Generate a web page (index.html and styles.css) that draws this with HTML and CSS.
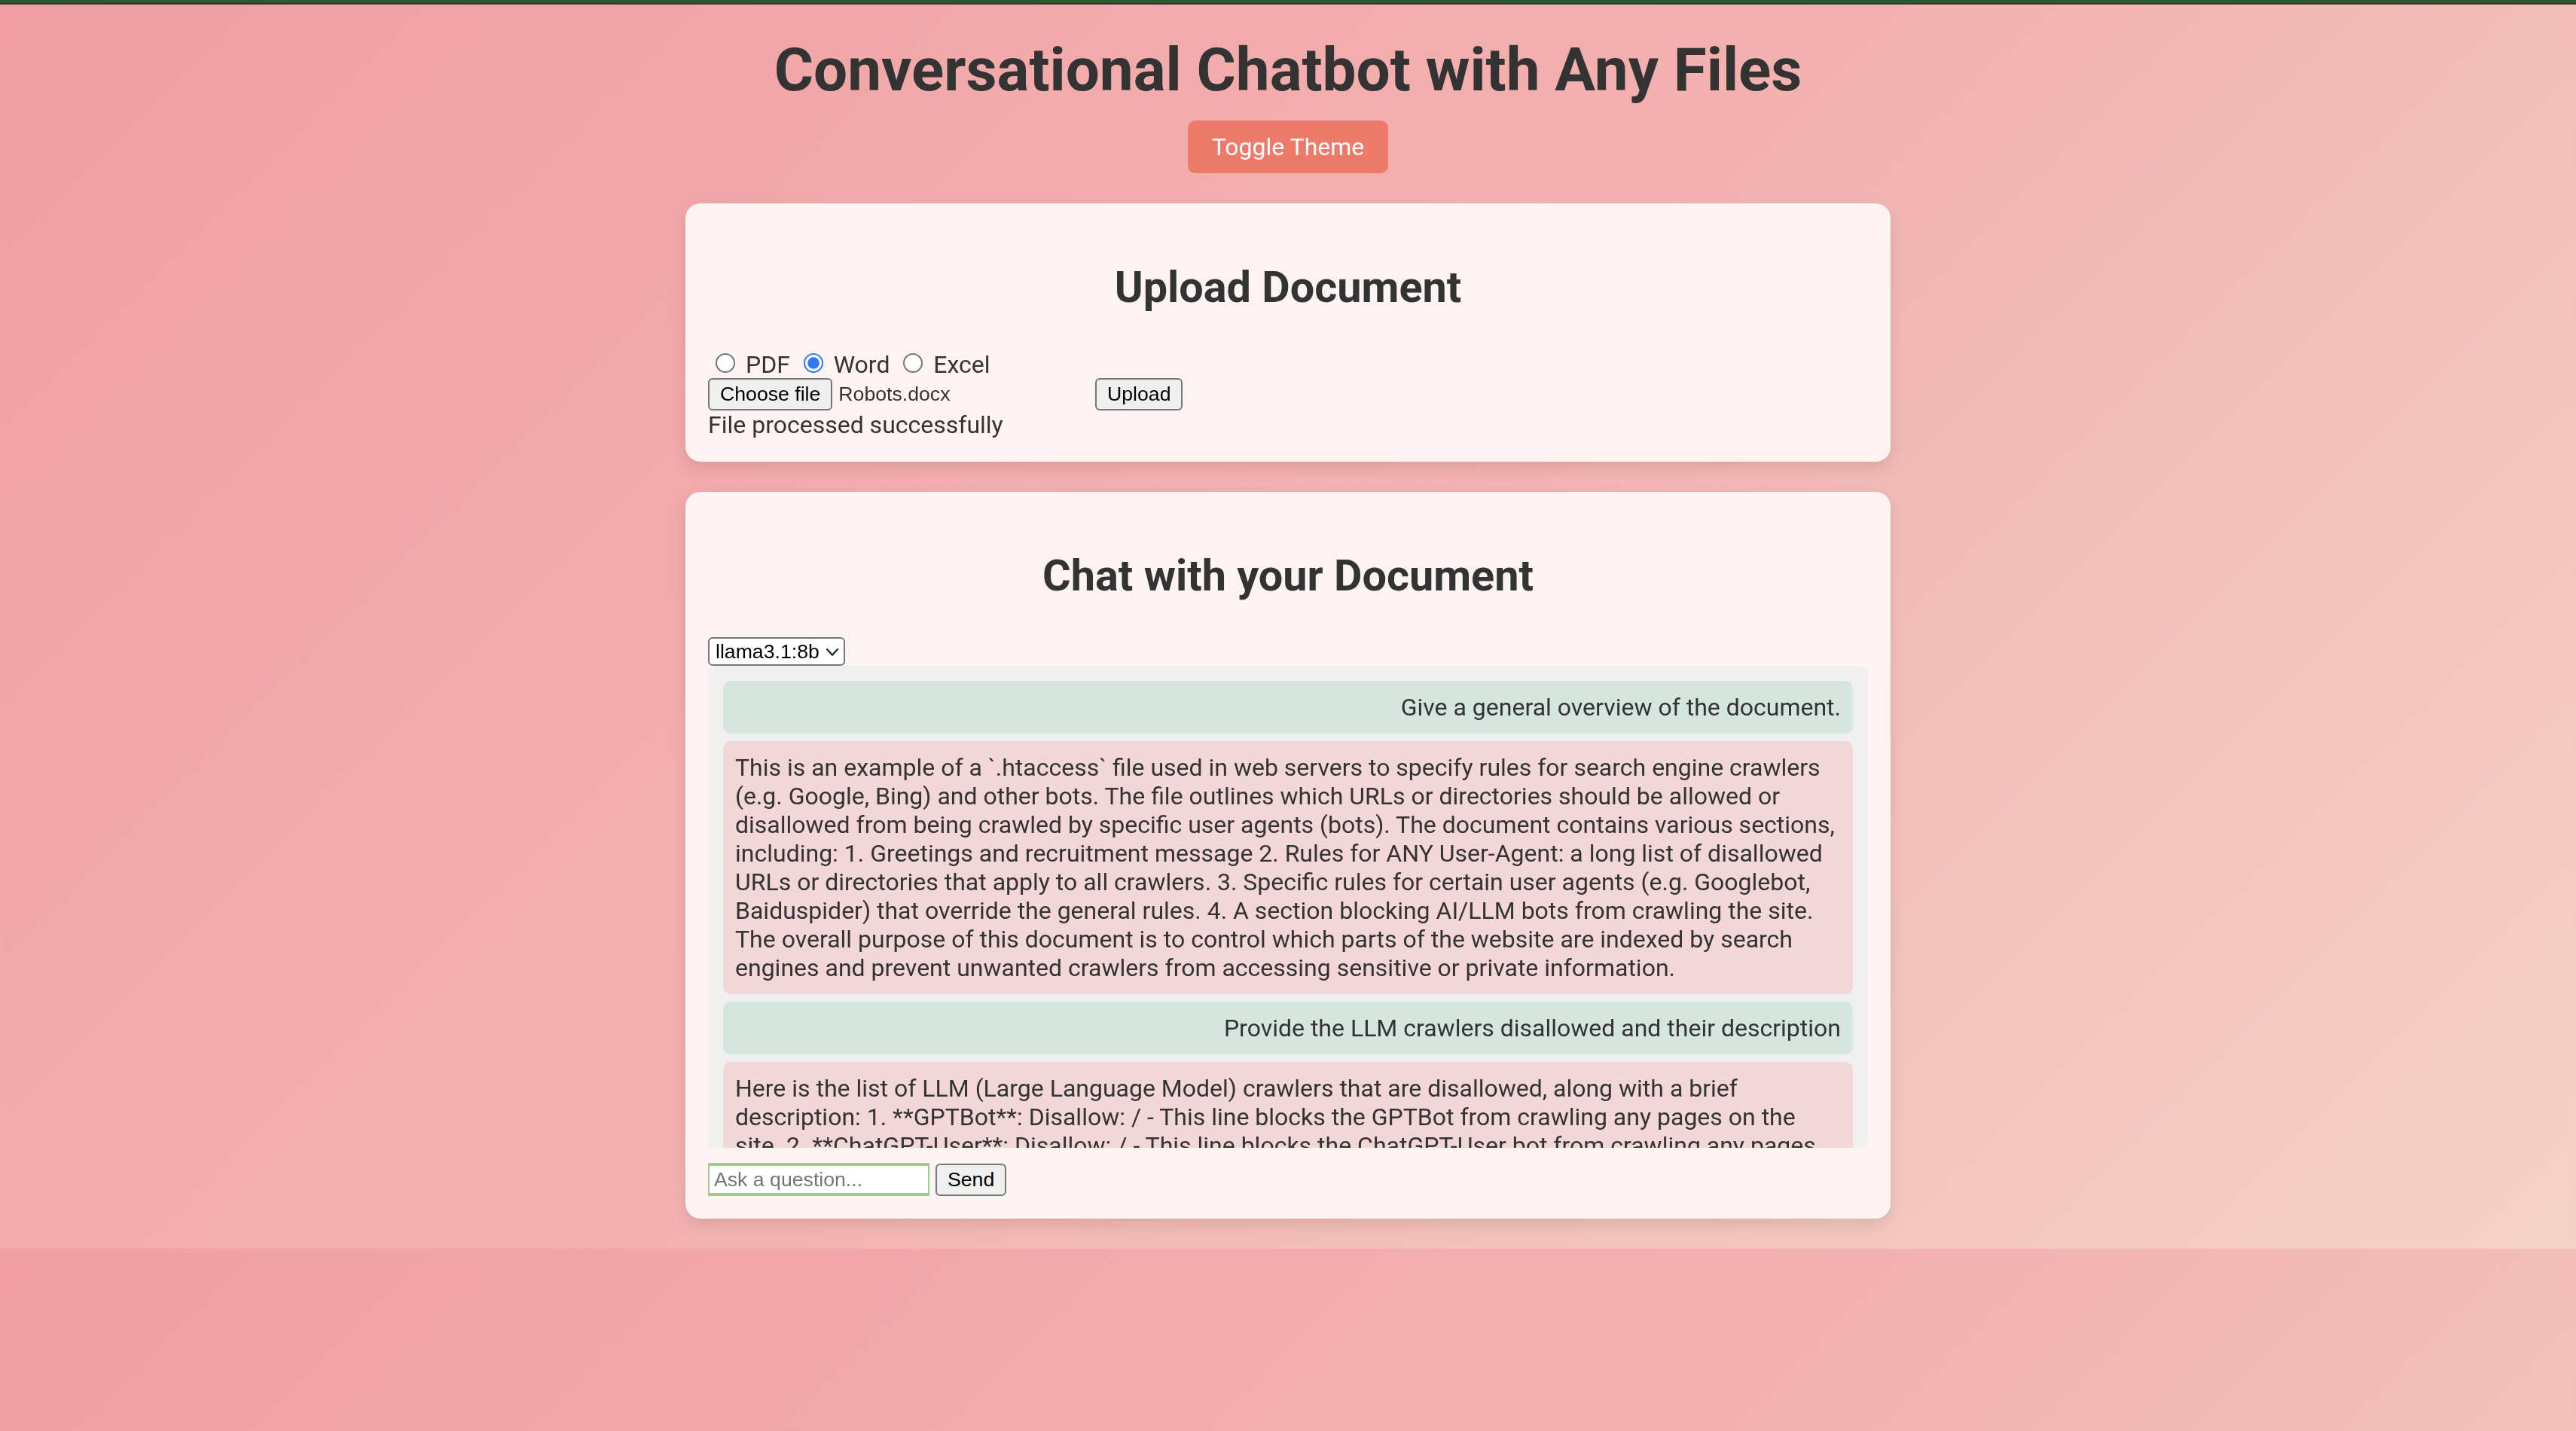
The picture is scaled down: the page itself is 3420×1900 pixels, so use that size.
FILE: index.html
```html
<!DOCTYPE html>
<html lang="en">
<head>
<meta charset="utf-8">
<title>Conversational Chatbot with Any Files</title>
<link rel="stylesheet" href="styles.css">
</head>
<body>
<div class="topbar"></div>
<div class="page">
  <h1 class="title">Conversational Chatbot with Any Files</h1>
  <div class="theme-row"><button class="theme-toggle">Toggle Theme</button></div>

  <section class="card">
    <h2 class="card-title">Upload Document</h2>
    <div class="doc-types"><label><input type="radio" name="doctype"> PDF</label> <label><input type="radio" name="doctype" checked> Word</label> <label><input type="radio" name="doctype"> Excel</label></div>
    <div class="upload-row">
      <span class="file-picker"><button class="native-btn">Choose file</button><span class="file-name">Robots.docx</span></span>
      <button class="native-btn">Upload</button>
    </div>
    <div class="status">File processed successfully</div>
  </section>

  <section class="card">
    <h2 class="card-title">Chat with your Document</h2>
    <div class="select-wrap">
      <select class="model-select">
        <option>llama3.1:8b</option>
      </select>
      <svg class="select-chevron" width="9" height="6" viewBox="0 0 9 6" aria-hidden="true"><path d="M0.7 0.7 L4.5 4.8 L8.3 0.7" fill="none" stroke="#222" stroke-width="1.1"/></svg>
    </div>
    <div class="chat-box">
      <div class="msg msg-user">Give a general overview of the document.</div>
      <div class="msg msg-bot">This is an example of a `.htaccess` file used in web servers to specify rules for search engine crawlers (e.g. Google, Bing) and other bots. The file outlines which URLs or directories should be allowed or disallowed from being crawled by specific user agents (bots). The document contains various sections, including: 1. Greetings and recruitment message 2. Rules for ANY User-Agent: a long list of disallowed URLs or directories that apply to all crawlers. 3. Specific rules for certain user agents (e.g. Googlebot, Baiduspider) that override the general rules. 4. A section blocking AI/LLM bots from crawling the site. The overall purpose of this document is to control which parts of the website are indexed by search engines and prevent unwanted crawlers from accessing sensitive or private information.</div>
      <div class="msg msg-user">Provide the LLM crawlers disallowed and their description</div>
      <div class="msg msg-bot">Here is the list of LLM (Large Language Model) crawlers that are disallowed, along with a brief description: 1. **GPTBot**: Disallow: / - This line blocks the GPTBot from crawling any pages on the site. 2. **ChatGPT-User**: Disallow: / - This line blocks the ChatGPT-User bot from crawling any pages on the site. 3. **Google-Extended**: Disallow: / - This line blocks Google-Extended from using the site content.</div>
    </div>
    <div class="ask-row">
      <input class="ask-input" type="text" placeholder="Ask a question...">
      <button class="native-btn">Send</button>
    </div>
  </section>
</div>
</body>
</html>
```

FILE: styles.css
```css
html {
  zoom: 2;
}

body {
  margin: 0;
  font-family: Roboto, "Noto Sans", Arial, sans-serif;
  color: #333;
  background: linear-gradient(135deg, #f09ea2 0%, #f3b2b0 50%, #f3d3c6 100%);
}

.topbar {
  height: 2px;
  background: #2b5a27;
  border-bottom: 1px solid #333;
}

.page {
  padding: 20px;
}

.title {
  margin: 0 0 10px;
  font-size: 40px;
  font-weight: 700;
  text-align: center;
  color: #333;
}

.theme-row {
  display: flex;
  justify-content: center;
  margin-bottom: 20px;
}

.theme-toggle {
  font-family: Roboto, "Noto Sans", Arial, sans-serif;
  font-size: 16px;
  padding: 8px 16px;
  border: none;
  border-radius: 5px;
  background: #ee7a69;
  color: #fff;
}

.card {
  box-sizing: border-box;
  max-width: 800px;
  margin: 0 auto 20px;
  padding: 15px;
  background: #fdf3f2;
  border-radius: 10px;
  box-shadow: 0 4px 10px rgba(0, 0, 0, 0.1);
}

.card:last-child {
  margin-bottom: 0;
}

.card-title {
  margin: 24px 0;
  font-size: 28.8px;
  font-weight: 700;
  text-align: center;
  color: #333;
}

.doc-types {
  font-size: 16px;
  line-height: 18px;
}

.doc-types input {
  accent-color: #3478f6;
}

.upload-row {
  display: flex;
  align-items: center;
  gap: 4px;
}

.file-picker {
  display: flex;
  align-items: center;
  width: 253px;
}

.file-name {
  margin-left: 4px;
  font: 13.33px "Liberation Sans", Arial, sans-serif;
  color: #333;
}

.native-btn {
  font: 13.33px "Liberation Sans", Arial, sans-serif;
  padding: 2px 7px;
  border: 1px solid #767676;
  border-radius: 3px;
  background: #efefef;
  color: #000;
}

.status {
  font-size: 16px;
}

.select-wrap {
  position: relative;
  width: 91px;
  height: 19px;
}

.model-select {
  display: block;
  box-sizing: border-box;
  appearance: none;
  -webkit-appearance: none;
  width: 91px;
  height: 19px;
  padding: 0 14px 0 4px;
  font: 13.33px "Liberation Sans", Arial, sans-serif;
  border: 1px solid #767676;
  border-radius: 3px;
  background: #fff;
  color: #000;
}

.select-chevron {
  position: absolute;
  right: 4px;
  top: 7px;
  pointer-events: none;
}

.chat-box {
  height: 300px;
  padding: 10px;
  margin-bottom: 10px;
  background: #f1f0f0;
  border-radius: 5px;
  overflow-y: auto;
  scrollbar-width: none;
}

.msg {
  padding: 8px;
  margin-bottom: 5px;
  border-radius: 5px;
  font-size: 16px;
}

.msg-user {
  background: #d5e6df;
  text-align: right;
}

.msg-bot {
  background: #f3d7d8;
}

.ask-row {
  display: flex;
  align-items: center;
  gap: 4px;
}

.ask-input {
  box-sizing: border-box;
  width: 147px;
  height: 22px;
  padding: 1px 3px;
  font: 13.33px "Liberation Sans", Arial, sans-serif;
  border-style: solid;
  border-color: #9fcb8b;
  border-width: 2px 1px;
  background: #fff;
}

.ask-input::placeholder {
  color: #757575;
}
```
